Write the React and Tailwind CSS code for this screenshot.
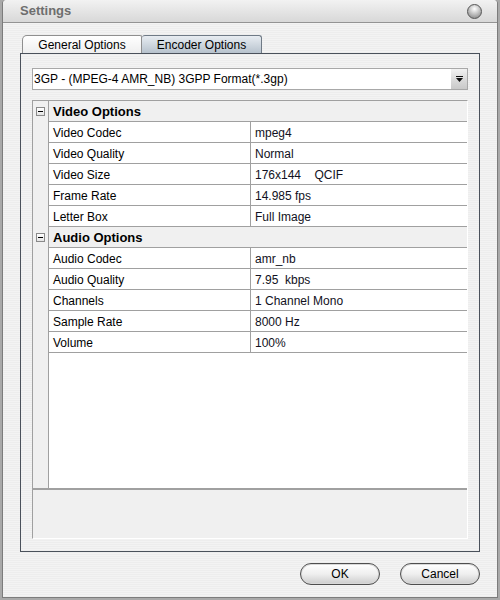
const videoRows = [
  ["Video Codec", "mpeg4"],
  ["Video Quality", "Normal"],
  ["Video Size", "176x144    QCIF"],
  ["Frame Rate", "14.985 fps"],
  ["Letter Box", "Full Image"],
];

const audioRows = [
  ["Audio Codec", "amr_nb"],
  ["Audio Quality", "7.95  kbps"],
  ["Channels", "1 Channel Mono"],
  ["Sample Rate", "8000 Hz"],
  ["Volume", "100%"],
];

const CategoryRow = ({ title }) => (
  <div className="flex h-[21px]">
    <div className="w-[16px] shrink-0 bg-[#f0f0f0] border-r border-[#a0a0a0] flex items-center justify-center">
      <div className="w-[9px] h-[9px] border border-[#8a8a8a] bg-gradient-to-b from-white to-[#e4e4e4] flex items-center justify-center">
        <div className="w-[5px] h-px bg-black" />
      </div>
    </div>
    <div className="flex-1 bg-[#f0f0f0] border-b border-[#a0a0a0] pl-[4px] pt-[2px] flex items-center text-[13px] font-bold text-black">
      {title}
    </div>
  </div>
);

const PropRow = ({ name, value }) => (
  <div className="flex h-[21px]">
    <div className="w-[16px] shrink-0 bg-[#f0f0f0] border-r border-[#a0a0a0]" />
    <div className="w-[202px] shrink-0 border-b border-r border-[#a0a0a0] pl-[4px] pt-[2px] flex items-center text-[12px] text-black">
      {name}
    </div>
    <div className="flex-1 border-b border-[#a0a0a0] pl-[4px] pt-[2px] flex items-center text-[12px] text-[#111122] whitespace-pre">
      {value}
    </div>
  </div>
);

const PillButton = ({ children }) => (
  <button className="w-[80px] h-[22px] rounded-full border border-[#4e4e4e] bg-gradient-to-b from-white via-[#efefef] to-[#cdcdcd] shadow-[inset_0_0_0_1px_#d8d8d8] text-[12px] text-black flex items-center justify-center">
    {children}
  </button>
);

export default function App() {
  return (
    <div
      className="w-[500px] h-[600px] bg-[#a9a9a9] pl-[2px] overflow-hidden"
      style={{ fontFamily: '"Liberation Sans", Arial, sans-serif' }}
    >
      <div className="w-[496px] h-[598px] flex flex-col border-l border-r border-b border-[#7c7c7c] rounded-t-[4px] bg-[repeating-linear-gradient(180deg,#ededed_0px,#ededed_1px,#f3f3f3_1px,#f3f3f3_2px)]">
        {/* Title bar */}
        <div className="h-[23px] shrink-0 flex items-center justify-between pl-[17px] pr-[15px] rounded-t-[4px] bg-gradient-to-b from-[#f2f2f2] to-[#d8d8d8] border-b border-[#939393]">
          <span className="text-[13px] font-bold text-[#6e6e6e]">Settings</span>
          <div className="w-[15px] h-[15px] rounded-full border border-[#555] bg-[radial-gradient(circle_at_50%_30%,#ffffff_0%,#c4c4c4_45%,#7a7a7a_100%)]" />
        </div>

        {/* Tabs */}
        <div className="mt-[12px] ml-[19px] flex h-[18px] shrink-0">
          <div className="w-[120px] h-[18px] rounded-tl-[5px] rounded-tr-[2px] border-t border-l border-r border-[#8f8f8f] bg-gradient-to-b from-white to-[#efefef] pt-px text-[12px] text-black flex items-center justify-center">
            General Options
          </div>
          <div className="w-[120px] h-[18px] rounded-t-[3px] border-t border-r border-[#6f7a86] bg-gradient-to-b from-[#e8edf2] to-[#b7c2cd] pt-px text-[12px] text-black flex items-center justify-center">
            Encoder Options
          </div>
        </div>

        {/* Panel */}
        <div className="ml-[17px] w-[460px] h-[499px] shrink-0 border border-[#4a515b] pt-[14px] pl-[11px]">
          {/* Format dropdown */}
          <div className="w-[436px] h-[22px] border border-[#a8a8a8] bg-white flex">
            <div className="flex-1 pl-[1px] flex items-center text-[12px] text-black">
              3GP - (MPEG-4 AMR_NB) 3GPP Format(*.3gp)
            </div>
            <div className="w-[16px] h-full bg-gradient-to-b from-[#f2f2f2] via-[#dcdcdc] to-[#c9c9c9] flex items-center justify-center">
              <svg width="7" height="6" viewBox="0 0 7 6">
                <rect x="0" y="0" width="7" height="1" fill="#111" />
                <path d="M0 2 H7 L3.5 6 Z" fill="#111" />
              </svg>
            </div>
          </div>

          {/* Property grid */}
          <div className="mt-[10px] w-[436px] h-[439px] flex flex-col border-t border-l border-[#a0a0a0] border-r border-b border-r-white border-b-white">
            <div className="flex-1 flex flex-col bg-white">
              <CategoryRow title="Video Options" />
              {videoRows.map(([n, v]) => (
                <PropRow key={n} name={n} value={v} />
              ))}
              <CategoryRow title="Audio Options" />
              {audioRows.map(([n, v]) => (
                <PropRow key={n} name={n} value={v} />
              ))}
              <div className="flex-1 flex">
                <div className="w-[16px] shrink-0 bg-[#f0f0f0] border-r border-[#a0a0a0]" />
                <div className="flex-1" />
              </div>
            </div>
            <div className="h-[50px] shrink-0 border-t-2 border-t-[#a0a0a0] bg-[#f0f0f0]" />
          </div>
        </div>

        {/* Buttons */}
        <div className="mt-[11px] ml-[17px] w-[460px] flex justify-end gap-[20px]">
          <PillButton>OK</PillButton>
          <PillButton>Cancel</PillButton>
        </div>
      </div>
    </div>
  );
}
